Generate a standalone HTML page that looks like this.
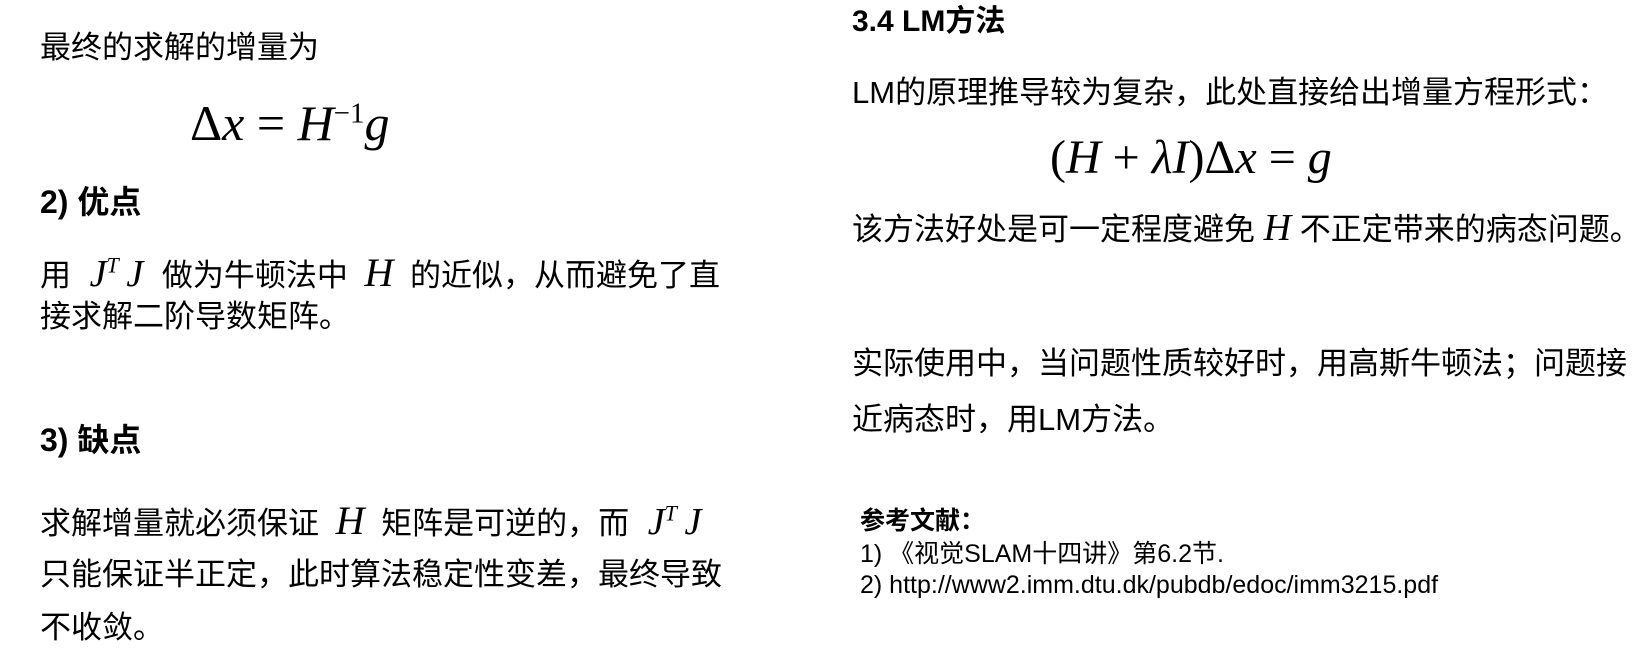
<!DOCTYPE html>
<html><head><meta charset="utf-8"><style>
body{margin:0;width:1646px;height:652px;background:#fff;position:relative;overflow:hidden;font-family:"Liberation Sans","Noto Sans CJK SC",sans-serif;color:#000}
.t{position:absolute;white-space:nowrap;line-height:1}
.m{font-family:"Liberation Serif",serif;font-style:italic}
.r{font-family:"Liberation Serif",serif}
</style></head><body>
<div class="t" style="left:40px;top:32px;font-size:31px">最终的求解的增量为</div>
<div class="t r" style="left:190px;top:98px;font-size:50px">Δ<span class="m">x</span> = <span class="m">H</span><sup style="font-size:29px">−1</sup><span class="m">g</span></div>
<div class="t" style="left:40px;top:186px;font-size:32px;font-weight:bold">2) 优点</div>
<div class="t" style="left:40px;top:253px;font-size:31px">用 <span class="m" style="font-size:38px;margin:0 10px">J<sup style="font-size:22px">T</sup>&thinsp;J</span> 做为牛顿法中 <span class="m" style="font-size:40px;margin:0 8px">H</span> 的近似，从而避免了直</div>
<div class="t" style="left:40px;top:301px;font-size:31px">接求解二阶导数矩阵。</div>
<div class="t" style="left:40px;top:424px;font-size:32px;font-weight:bold">3) 缺点</div>
<div class="t" style="left:40px;top:501px;font-size:31px">求解增量就必须保证 <span class="m" style="font-size:40px;margin:0 8px">H</span> 矩阵是可逆的，而 <span class="m" style="font-size:38px;margin:0 10px">J<sup style="font-size:22px">T</sup>&thinsp;J</span></div>
<div class="t" style="left:40px;top:559px;font-size:31px">只能保证半正定，此时算法稳定性变差，最终导致</div>
<div class="t" style="left:40px;top:612px;font-size:31px">不收敛。</div>

<div class="t" style="left:852px;top:7px;font-size:30px;font-weight:bold">3.4 LM方法</div>
<div class="t" style="left:852px;top:77px;font-size:31px">LM的原理推导较为复杂，此处直接给出增量方程形式：</div>
<div class="t r" style="left:1050px;top:134px;font-size:48px">(<span class="m">H</span> + <span class="m">λI</span>)Δ<span class="m">x</span> = <span class="m">g</span></div>
<div class="t" style="left:852px;top:209px;font-size:31px">该方法好处是可一定程度避免 <span class="m" style="font-size:38px">H</span> 不正定带来的病态问题。</div>
<div class="t" style="left:852px;top:348px;font-size:31px">实际使用中，当问题性质较好时，用高斯牛顿法；问题接</div>
<div class="t" style="left:852px;top:404px;font-size:31px">近病态时，用LM方法。</div>
<div class="t" style="left:860px;top:509px;font-size:25px;font-weight:bold">参考文献：</div>
<div class="t" style="left:860px;top:542px;font-size:25px">1) 《视觉SLAM十四讲》第6.2节.</div>
<div class="t" style="left:860px;top:573px;font-size:25px">2) http://www2.imm.dtu.dk/pubdb/edoc/imm3215.pdf</div>
</body></html>
